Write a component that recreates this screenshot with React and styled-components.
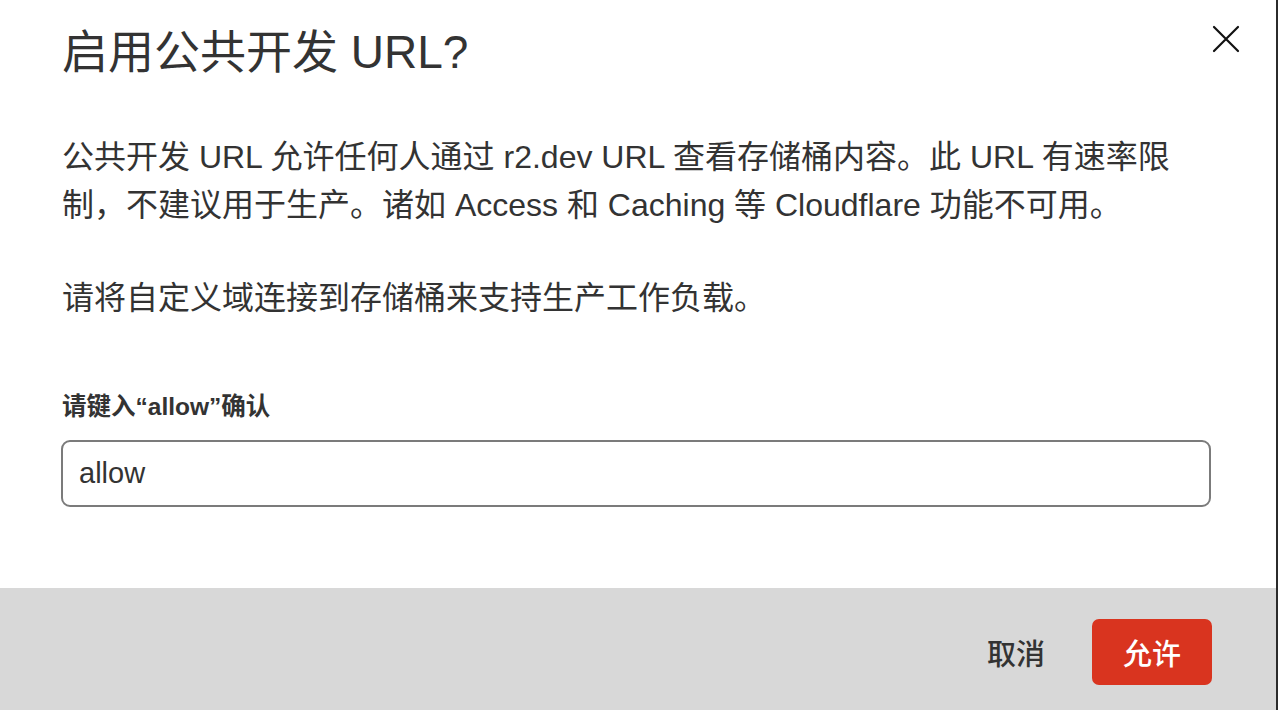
import styled, { createGlobalStyle } from "styled-components";

const GlobalStyle = createGlobalStyle`
    html, body {
        margin: 0;
        padding: 0;
        background: #2b2b2b;
        overflow: hidden;
    }
    body {
        font-family: "Liberation Sans", "Noto Sans CJK SC", sans-serif;
        color: #333333;
    }
`

const CloseIcon = () => (
    <svg width="28" height="28" viewBox="0 0 28 28" fill="none">
        <path d="M2 2 L26 26 M26 2 L2 26" stroke="#111" strokeWidth="2.2" strokeLinecap="round" />
    </svg>
)

const App = () => {
    return (
        <>
            <GlobalStyle />
            <Modal>
                <Body>
                    <Header>
                        <Title>启用公共开发 URL?</Title>
                        <CloseButton aria-label="close">
                            <CloseIcon />
                        </CloseButton>
                    </Header>
                    <Paragraph>
                        公共开发 URL 允许任何人通过 r2.dev URL 查看存储桶内容。此 URL 有速率限制，不建议用于生产。诸如 Access 和 Caching 等 Cloudflare 功能不可用。
                    </Paragraph>
                    <Paragraph>请将自定义域连接到存储桶来支持生产工作负载。</Paragraph>
                    <Label htmlFor="confirm">请键入“allow”确认</Label>
                    <Input id="confirm" defaultValue="allow" />
                </Body>
                <Footer>
                    <Button>取消</Button>
                    <Button primary>允许</Button>
                </Footer>
            </Modal>
        </>
    );
}

const Modal = styled.div`
    width: 1276px;
    height: 710px;
    background: #ffffff;
    display: flex;
    flex-direction: column;
`
const Body = styled.div`
    flex: 1;
    padding: 0 65px 0 61px;
    display: flex;
    flex-direction: column;
`
const Header = styled.div`
    display: flex;
    justify-content: space-between;
    align-items: flex-start;
    height: 133px;
`
const Title = styled.h1`
    margin: 0;
    padding-top: 20px;
    padding-left: 1px;
    font-size: 46px;
    font-weight: 400;
    line-height: 64px;
    color: #333;
`
const CloseButton = styled.button`
    border: none;
    background: none;
    padding: 0;
    margin-top: 25px;
    margin-right: -29px;
    width: 28px;
    height: 28px;
    cursor: pointer;
`
const Paragraph = styled.p`
    margin: 0 0 45px 0;
    padding-left: 1px;
    max-width: 1118px;
    font-size: 32px;
    line-height: 48px;
    color: #333;
`
const Label = styled.label`
    margin-top: 23px;
    padding-left: 1px;
    font-size: 24.5px;
    font-weight: 700;
    line-height: 34px;
    color: #333;
`
const Input = styled.input`
    margin-top: 16px;
    height: 67px;
    box-sizing: border-box;
    border: 2px solid #7b7b7b;
    border-radius: 9px;
    padding: 0 16px;
    font-family: inherit;
    font-size: 29px;
    color: #333;
    outline: none;
`
const Footer = styled.div`
    height: 122px;
    box-sizing: border-box;
    background: #d8d8d8;
    display: flex;
    justify-content: flex-end;
    align-items: flex-start;
    gap: 12px;
    padding: 31px 64px 0 0;
`
const Button = styled.button`
    height: 66px;
    padding: 0 ${(props) => props.primary ? "30px" : "35px"};
    min-width: ${(props) => props.primary ? "120px" : "auto"};
    border: none;
    border-radius: 7px;
    background: ${(props) => props.primary ? "#d9341f" : "transparent"};
    color: ${(props) => props.primary ? "#ffffff" : "#333333"};
    font-family: inherit;
    font-size: 29px;
    font-weight: 500;
    cursor: pointer;
`

export default App;
